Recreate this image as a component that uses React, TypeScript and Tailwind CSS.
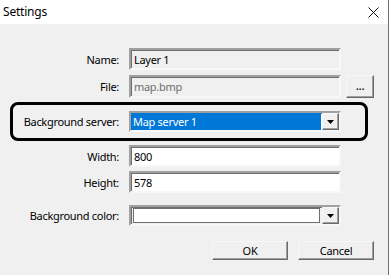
const sunken =
  "border-[2px] border-t-[#a0a0a0] border-l-[#a0a0a0] border-b-[#f7f7f7] border-r-[#f7f7f7] shadow-[inset_1px_1px_0_#6e6e6e]";

const raised =
  "border border-t-[#f7f7f7] border-l-[#f7f7f7] border-b-[#696969] border-r-[#696969] shadow-[inset_-1px_-1px_0_#a0a0a0]";

function DropArrow() {
  return (
    <div
      className={`flex h-full w-[17px] shrink-0 items-center justify-center bg-[#f0f0f0] ${raised}`}
    >
      <svg width="7" height="4" viewBox="0 0 7 4">
        <path d="M0 0h7L3.5 4z" fill="#000" />
      </svg>
    </div>
  );
}

function Row({
  label,
  children,
  className = "",
}: {
  label: string;
  children: React.ReactNode;
  className?: string;
}) {
  return (
    <div className={`flex items-center gap-[10px] ${className}`}>
      <span className="w-[119px] shrink-0 whitespace-nowrap text-right">{label}</span>
      {children}
    </div>
  );
}

export default function App() {
  return (
    <div className="flex h-[275px] w-[390px] bg-white">
      <div
        className="flex h-full w-[389px] flex-col border-r border-[#707070] bg-[#f0f0f0] text-[11px] leading-none tracking-[-0.3px] text-black"
        style={{ fontFamily: '"Noto Sans", sans-serif' }}
      >
        <div className="flex h-[24px] shrink-0 items-center justify-between bg-white pl-[3px] pr-[9px]">
          <span className="text-[12px] tracking-[-0.2px]">Settings</span>
          <svg width="11" height="11" viewBox="0 0 11 11">
            <path d="M0.5 0.5l10 10M10.5 0.5l-10 10" stroke="#111" strokeWidth="1" />
          </svg>
        </div>

        <Row label="Name:" className="mt-[24px] h-[22px]">
          <div className={`flex h-full w-[212px] items-center bg-[#f0f0f0] pl-[3px] ${sunken}`}>
            Layer 1
          </div>
        </Row>

        <Row label="File:" className="mt-[5px] h-[23px]">
          <div
            className={`flex h-full w-[212px] items-center bg-[#f0f0f0] pl-[3px] text-[#6d6d6d] ${sunken}`}
          >
            map.bmp
          </div>
          <button
            className={`-ml-[5px] flex h-full w-[28px] items-end justify-center bg-[#f0f0f0] pb-[5px] text-[12px] ${raised}`}
          >
            ...
          </button>
        </Row>

        <div className="ml-[10px] mt-[4px] flex h-[39px] w-[358px] items-center gap-[10px] rounded-[8px] border-[3px] border-black">
          <span className="w-[106px] shrink-0 whitespace-nowrap text-right">Background server:</span>
          <div className={`flex h-[21px] w-[212px] items-stretch bg-white ${sunken}`}>
            <div className="flex flex-1 items-center bg-[#0078d7] pl-[2px] text-white">
              Map server 1
            </div>
            <div className="ml-[1px]">
              <DropArrow />
            </div>
          </div>
        </div>

        <Row label="Width:" className="mt-[4px] h-[22px]">
          <div className={`flex h-full w-[212px] items-center bg-white pl-[3px] ${sunken}`}>800</div>
        </Row>

        <Row label="Height:" className="mt-[4px] h-[22px]">
          <div className={`flex h-full w-[212px] items-center bg-white pl-[3px] ${sunken}`}>578</div>
        </Row>

        <Row label="Background color:" className="mt-[12px] h-[21px]">
          <div className={`flex h-full w-[212px] items-stretch gap-[2px] bg-[#f0f0f0] ${sunken}`}>
            <div className="my-[1px] ml-[2px] flex-1 border border-[#6e6e6e] bg-white" />
            <DropArrow />
          </div>
        </Row>

        <div className="ml-[212px] mt-[15px] flex h-[19px] gap-[10px]">
          <button className={`w-[76px] bg-[#f0f0f0] ${raised}`}>OK</button>
          <button className={`w-[76px] bg-[#f0f0f0] ${raised}`}>Cancel</button>
        </div>
      </div>
    </div>
  );
}
